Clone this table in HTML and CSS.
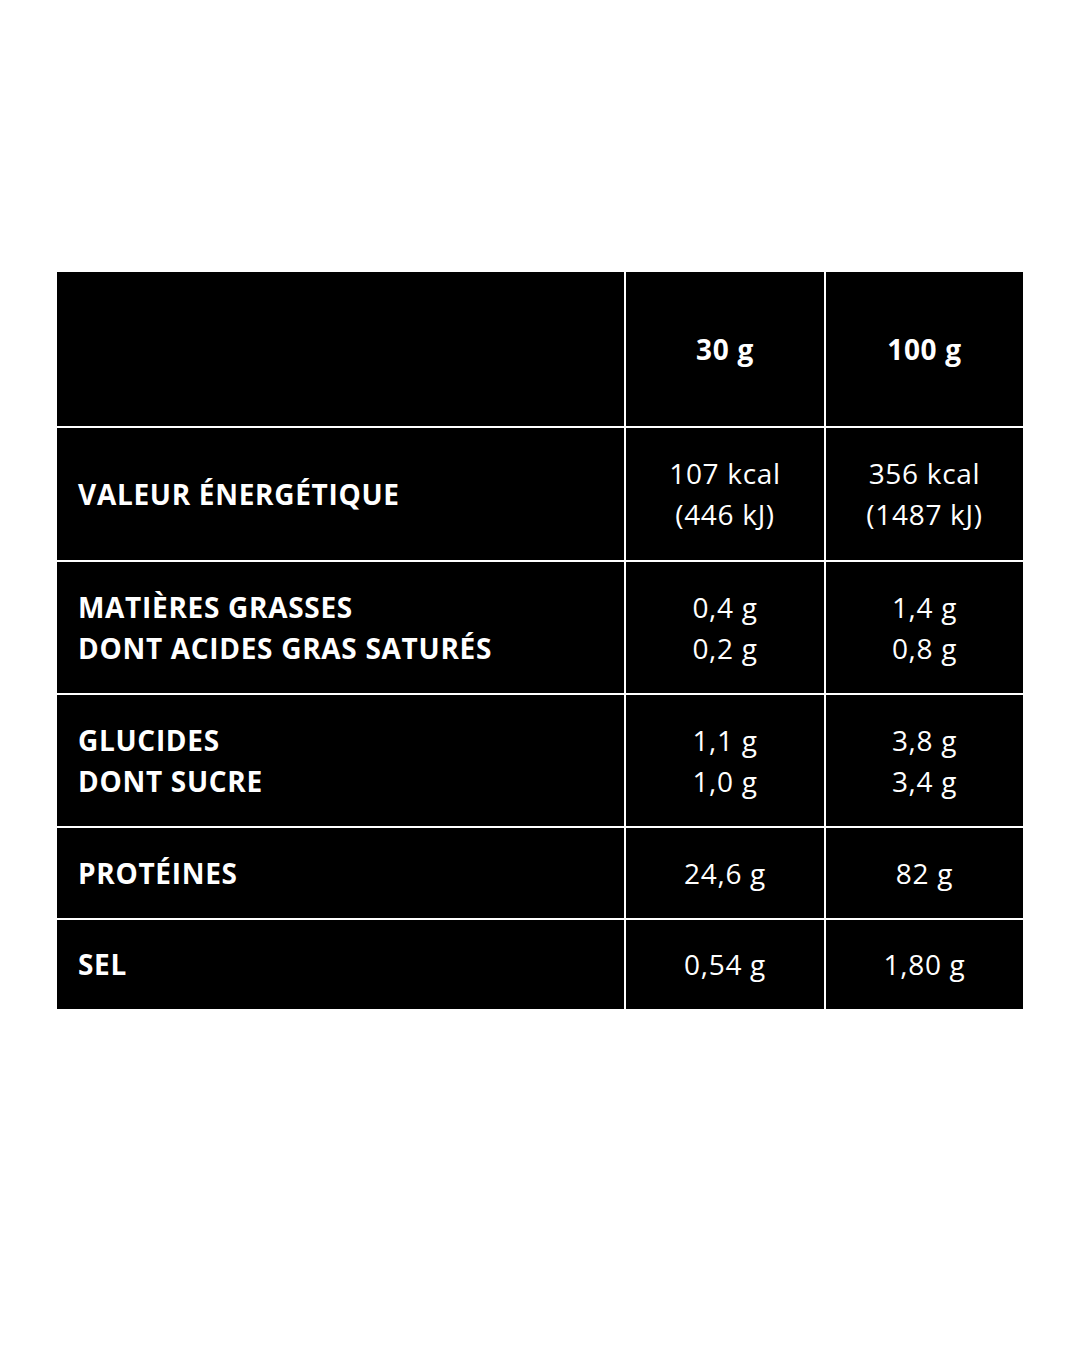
FILE: index.html
```html
<!DOCTYPE html>
<html lang="fr">
<head>
<meta charset="utf-8">
<link rel="stylesheet" href="styles.css">
</head>
<body>
<div class="page">
  <div class="table">
    <div class="cell label"></div>
    <div class="cell value head">30 g</div>
    <div class="cell value head">100 g</div>

    <div class="cell label">VALEUR ÉNERGÉTIQUE</div>
    <div class="cell value">107 kcal<br>(446 kJ)</div>
    <div class="cell value">356 kcal<br>(1487 kJ)</div>

    <div class="cell label">MATIÈRES GRASSES<br>DONT ACIDES GRAS SATURÉS</div>
    <div class="cell value">0,4 g<br>0,2 g</div>
    <div class="cell value">1,4 g<br>0,8 g</div>

    <div class="cell label">GLUCIDES<br>DONT SUCRE</div>
    <div class="cell value">1,1 g<br>1,0 g</div>
    <div class="cell value">3,8 g<br>3,4 g</div>

    <div class="cell label">PROTÉINES</div>
    <div class="cell value">24,6 g</div>
    <div class="cell value">82 g</div>

    <div class="cell label">SEL</div>
    <div class="cell value">0,54 g</div>
    <div class="cell value">1,80 g</div>
  </div>
</div>
</body>
</html>
```

FILE: styles.css
```css
html, body {
  margin: 0;
  padding: 0;
  background: #ffffff;
}
.page {
  width: 1080px;
  height: 1350px;
  padding-top: 272px;
  padding-left: 57px;
  box-sizing: border-box;
}
.table {
  display: grid;
  width: 966px;
  grid-template-columns: 567px 198px 197px;
  grid-template-rows: 154px 132px 131px 131px 90px 89px;
  gap: 2px;
  background: #ffffff;
  font-family: "Open Sans", "Liberation Sans", sans-serif;
  font-size: 28px;
  line-height: 41px;
  letter-spacing: 0.7px;
  color: #ffffff;
}
.cell {
  background: #000000;
  display: flex;
  flex-direction: column;
  justify-content: center;
}
.label {
  font-weight: 700;
  padding-left: 21px;
  text-align: left;
}
.value {
  font-weight: 400;
  text-align: center;
  align-items: center;
}
.head {
  font-weight: 700;
}
```
